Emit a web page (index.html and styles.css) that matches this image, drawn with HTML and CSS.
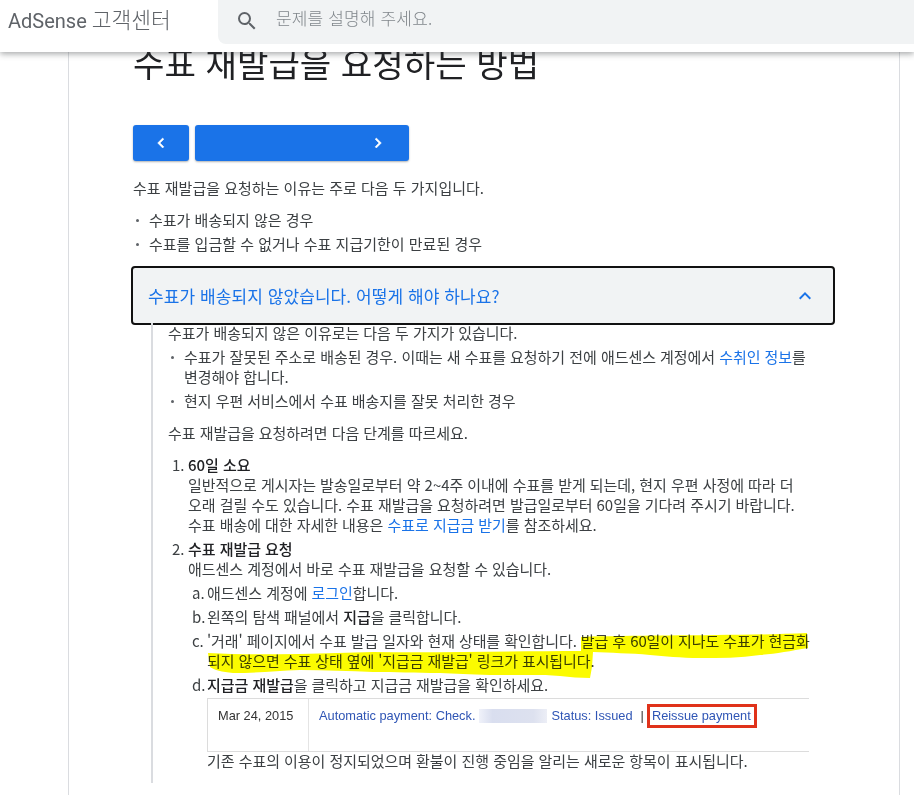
FILE: index.html
```html
<!DOCTYPE html>
<html lang="ko">
<head>
<meta charset="utf-8">
<title>AdSense 고객센터</title>
<link rel="stylesheet" href="styles.css">
</head>
<body>
<header class="topbar">
  <div class="brand">AdSense <span class="brand-ko">고객센터</span></div>
  <div class="search">
    <svg class="search-icon" viewBox="0 0 24 24" width="24" height="24"><path fill="#5f6368" d="M15.5 14h-.79l-.28-.27A6.47 6.47 0 0 0 16 9.5 6.5 6.5 0 1 0 9.5 16c1.61 0 3.09-.59 4.23-1.57l.27.28v.79l5 4.99L20.49 19l-4.99-5zm-6 0C7.01 14 5 11.99 5 9.5S7.01 5 9.5 5 14 7.01 14 9.5 11.99 14 9.5 14z"/></svg>
    <span class="search-text">문제를 설명해 주세요.</span>
  </div>
</header>
<main class="card">
  <h1 class="title">수표 재발급을 요청하는 방법</h1>
  <div class="navs">
    <button class="nav nav-prev"><svg viewBox="0 0 24 24" width="20" height="20"><path fill="#fff" d="M15.4 7.4 14 6l-6 6 6 6 1.4-1.4L10.8 12z"/></svg></button>
    <button class="nav nav-next"><svg viewBox="0 0 24 24" width="20" height="20"><path fill="#fff" d="M8.6 7.4 10 6l6 6-6 6-1.4-1.4L13.2 12z"/></svg></button>
  </div>
  <p class="intro">수표 재발급을 요청하는 이유는 주로 다음 두 가지입니다.</p>
  <ul class="bullets top-bullets">
    <li>수표가 배송되지 않은 경우</li>
    <li>수표를 입금할 수 없거나 수표 지급기한이 만료된 경우</li>
  </ul>
  <div class="expander">
    <span>수표가 배송되지 않았습니다. 어떻게 해야 하나요?</span>
    <svg viewBox="0 0 24 24" width="24" height="24"><path fill="#1a73e8" d="M7.4 15.4 6 14l6-6 6 6-1.4 1.4L12 10.8z"/></svg>
  </div>
  <section class="answer">
    <p class="lead">수표가 배송되지 않은 이유로는 다음 두 가지가 있습니다.</p>
    <ul class="bullets inner-bullets">
      <li>수표가 잘못된 주소로 배송된 경우. 이때는 새 수표를 요청하기 전에 애드센스 계정에서 <a href="#">수취인 정보</a>를 변경해야 합니다.</li>
      <li>현지 우편 서비스에서 수표 배송지를 잘못 처리한 경우</li>
    </ul>
    <p class="steps-intro">수표 재발급을 요청하려면 다음 단계를 따르세요.</p>
    <ol class="steps">
      <li><b>60일 소요</b><br>일반적으로 게시자는 발송일로부터 약 2~4주 이내에 수표를 받게 되는데, 현지 우편 사정에 따라 더 오래 걸릴 수도 있습니다. 수표 재발급을 요청하려면 발급일로부터 60일을 기다려 주시기 바랍니다. 수표 배송에 대한 자세한 내용은 <a href="#">수표로 지급금 받기</a>를 참조하세요.</li>
      <li><b>수표 재발급 요청</b><br>애드센스 계정에서 바로 수표 재발급을 요청할 수 있습니다.
        <ol class="substeps">
          <li>애드센스 계정에 <a href="#">로그인</a>합니다.</li>
          <li>왼쪽의 탐색 패널에서 <b>지급</b>을 클릭합니다.</li>
          <li class="marked"><span class="tight">'거래' 페이지에서 수표 발급 일자와 현재 상태를 확인합니다. 발급 후 60일이 지나도 수표가 현금화</span><br>되지 않으면 수표 상태 옆에 '지급금 재발급' 링크가 표시됩니다.
            <svg class="marker" viewBox="0 0 620 50" width="620" height="50"><path fill="#fbfb00" d="M381 6 C440 4 540 5 607 2 L608 17 C590 20 575 23 560 24 C540 27 520 27 500 27 C480 27 465 25 450 24 C430 22 410 22 393 21 L392 36 L390 47 C380 47 370 46 360 45 C350 44 340 44 333 44 C310 44 300 44 290 44 C270 43 255 43 240 42 C215 42 195 41 173 41 C150 40 125 39 100 39 C75 40 55 42 33 42 C22 41 14 39 10 36 L8 22 C40 24 70 23 100 23 C125 22 150 22 173 21 C240 22 320 20 381 20 Z"/></svg>
          </li>
          <li><b>지급금 재발급</b>을 클릭하고 지급금 재발급을 확인하세요.
            <div class="shot">
              <div class="shot-date">Mar 24, 2015</div>
              <div class="shot-body">
                <span>Automatic payment: Check.</span>
                <i class="shot-blur"></i>
                <span>Status: Issued</span>
                <span class="shot-sep">|</span>
                <span class="shot-reissue">Reissue payment</span>
              </div>
            </div>
            <div class="after">기존 수표의 이용이 정지되었으며 환불이 진행 중임을 알리는 새로운 항목이 표시됩니다.</div>
          </li>
        </ol>
      </li>
    </ol>
  </section>
</main>
</body>
</html>
```
FILE: styles.css
```css
* { box-sizing: border-box; }
html, body { margin: 0; padding: 0; height: 795px; overflow: hidden; background: #fff; }
body { font-family: "Noto Sans CJK KR", "Noto Sans", sans-serif; font-size: 15px; line-height: 20px; color: #3c4043; }
a { color: #1a73e8; text-decoration: none; }
b { color: #202124; font-weight: 500; }
p { margin: 0; }
ul, ol { margin: 0; padding: 0; list-style: none; }

.topbar { position: fixed; top: 0; left: 0; width: 914px; height: 52px; background: #fff; box-shadow: 0 2px 6px rgba(60,64,67,.45); display: flex; align-items: flex-start; z-index: 5; }
.brand { width: 218px; padding: 5px 0 0 8px; font-family: Roboto, "Noto Sans CJK KR", sans-serif; font-size: 20px; line-height: 28px; color: #5f6368; white-space: nowrap; }
.brand-ko { font-family: "Noto Sans CJK KR", sans-serif; font-size: 21.5px; font-weight: 300; }
.search { flex: 1; height: 44px; background: #f1f3f4; border-bottom-left-radius: 8px; display: flex; align-items: center; padding-left: 17px; }
.search-text { margin-left: 17px; font-size: 17px; letter-spacing: .15px; font-weight: 300; color: #80868b; margin-top: -8px; }
.search-icon { margin-top: -3px; }

.card { margin-left: 68px; width: 832px; height: 795px; border-left: 1px solid #dadce0; border-right: 1px solid #dadce0; padding: 40px 64px 0 64px; position: relative; }
.title { margin: 0; font-size: 34.2px; font-weight: 400; line-height: 44px; color: #202124; }
.navs { display: flex; gap: 6px; margin-top: 41px; }
.nav { height: 36px; border: 0; border-radius: 3px; background: #1a73e8; box-shadow: 0 1px 2px rgba(60,64,67,.4); padding: 0; display: flex; align-items: center; justify-content: center; }
.nav svg { stroke: #fff; stroke-width: .6; }
.nav-prev { width: 56px; }
.nav-next { width: 214px; padding-left: 173px; justify-content: flex-start; }
.intro { margin-top: 17px; }
.bullets li { position: relative; padding-left: 16px; }
.bullets li::before { content: ""; position: absolute; left: 3px; top: 9px; width: 3px; height: 3px; border-radius: 50%; background: #5f6368; }
.top-bullets { margin-top: 12px; }
.top-bullets li + li { margin-top: 4px; }
.expander { margin: 12px 0 0 -2px; width: 704px; height: 59px; background: #f1f3f4; border: 2px solid #111; border-radius: 4px; padding: 0 16px 0 15px; display: flex; align-items: center; justify-content: space-between; color: #1a73e8; font-size: 17px; letter-spacing: .08px; }
.answer { margin-left: 18px; width: 658px; height: 460px; border-left: 2px solid #dadce0; padding-left: 15px; letter-spacing: -.05px; }
.lead { margin-top: -2px; }
.inner-bullets { margin-top: 4px; }
.inner-bullets li + li { margin-top: 4px; }
.steps-intro { margin-top: 12px; }
.steps { margin-top: 12px; counter-reset: s; }
.steps > li { position: relative; padding-left: 20px; margin-bottom: 4px; counter-increment: s; }
.steps > li::before { content: counter(s) "."; position: absolute; left: 4px; top: 0; }
.substeps { counter-reset: ss; margin-top: 4px; }
.substeps > li { position: relative; padding-left: 19px; margin-bottom: 4px; counter-increment: ss; }
.substeps > li::before { content: counter(ss, lower-alpha) "."; position: absolute; left: 4px; top: 0; }
.substeps > li.marked { letter-spacing: -.1px; }
.tight { white-space: nowrap; }
.marker { position: absolute; left: 12px; top: 0; mix-blend-mode: multiply; pointer-events: none; }
.shot { display: flex; margin-top: 3px; width: 602px; height: 54px; border-top: 1px solid #dcdcdc; border-bottom: 1px solid #dcdcdc; border-left: 1px solid #dcdcdc; font-family: "Liberation Sans", Arial, sans-serif; font-size: 12.8px; line-height: 18px; letter-spacing: 0; }
.shot-date { width: 101px; padding: 8px 0 0 10px; border-right: 1px solid #e4e4e4; color: #333; white-space: nowrap; }
.shot-body { display: flex; align-items: flex-start; padding: 8px 0 0 10px; color: #2f55b5; white-space: nowrap; position: relative; }
.shot-blur { width: 68px; height: 14px; margin: 2px 4px 0 4px; background: linear-gradient(90deg, #f0f2fa, #d9deef 20%, #dde1ef 80%, #eceef6); }
.shot-sep { margin-left: 8px; color: #333; }
.shot-reissue { margin-left: 6px; outline: 3px solid #e0321a; padding: 0 3px 0 2px; }
.after { margin-top: -1px; white-space: nowrap; }
```
